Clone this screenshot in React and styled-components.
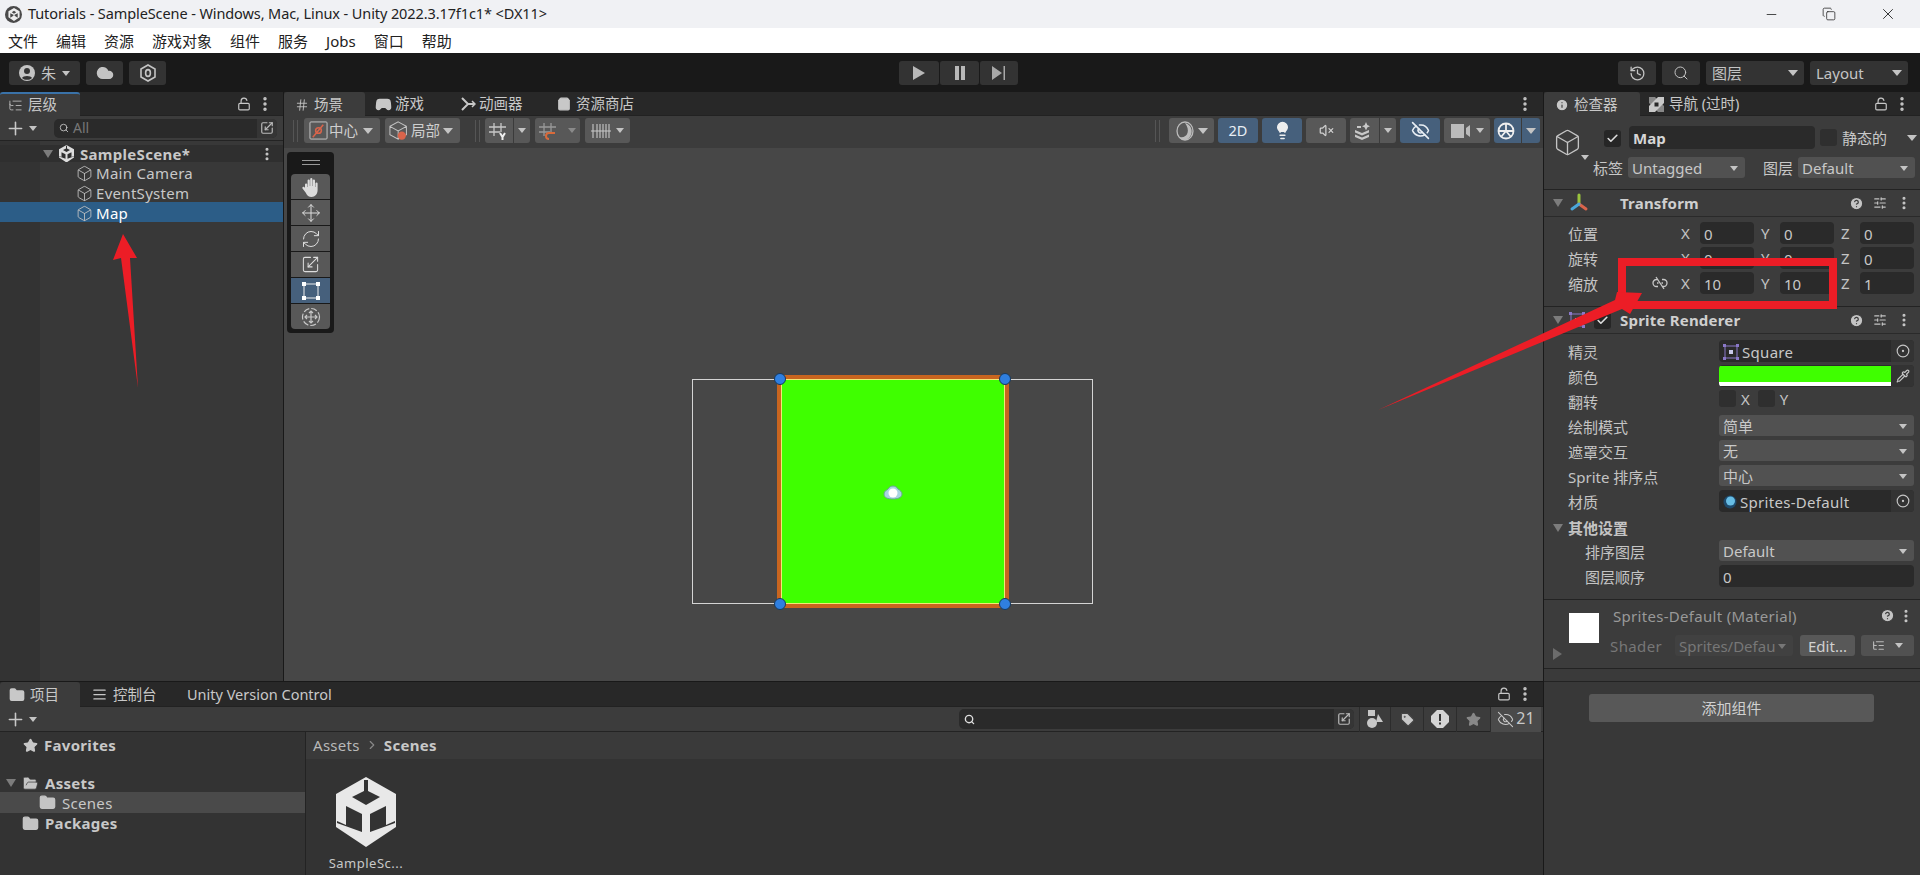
import React from 'react';
import styled, { createGlobalStyle } from 'styled-components';
import {
  Move, RefreshCw, Scaling, History, Search, LockOpen, EllipsisVertical, Plus,
  EyeOff, SlidersHorizontal, Star, Tag, Lightbulb, Gamepad2, Hash, ShoppingBag, Info,
  Box, Cloud, CircleHelp, ListTree, X, Minus, Copy, Check, Pipette, CircleDot, VolumeX, Folder, FolderOpen, ChevronRight, AlignJustify, Search as Lens
} from 'lucide-react';

const Global = createGlobalStyle`
  html, body { margin: 0; padding: 0; height: 100%; background: #191919; overflow: hidden; }
  * { box-sizing: border-box; }
  #root { height: 100%; }
`;

const FONT = `"Noto Sans", "Noto Sans CJK SC", sans-serif`;

const Page = styled.div`
  position: relative; width: 1920px; height: 875px; display: flex; flex-direction: column;
  font: 15px/1.2 ${FONT}; color: #c8c8c8; overflow: hidden; background: #191919;
`;
const TitleBar = styled.div`
  height: 28px; flex: none; background: #f0f1f4; color: #222; display: flex; align-items: center; padding: 0 0 0 5px;
`;
const TitleIcon = styled.div`
  width: 17px; height: 17px; border-radius: 50%; background: #4a4a4a; display: flex; align-items: center; justify-content: center; margin-right: 6px;
`;
const TitleText = styled.div`
  font-size: 14.5px; letter-spacing: -0.1px; white-space: nowrap;
`;
const WinControls = styled.div`
  margin-left: auto; display: flex; align-items: center; gap: 43px; padding-right: 23px; color: #222;
`;
const MenuBar = styled.div`
  height: 25px; flex: none; background: #fff; color: #222; display: flex; align-items: center; gap: 18px; padding: 0 0 0 8px;
`;
const MainBar = styled.div`
  height: 39px; flex: none; background: #191919; display: grid; grid-template-columns: 1fr auto 1fr; align-items: start; padding: 8px 12px 0 9px;
`;
const BarGroup = styled.div`
  display: flex; gap: ${p => p.$gap ?? 6}px; justify-content: ${p => p.$end ? 'flex-end' : 'flex-start'};
`;
const BarBtn = styled.div`
  height: 24px; width: ${p => p.$w}px; background: #333; border-radius: 3px; display: flex; align-items: center;
  justify-content: ${p => p.$spread ? 'space-between' : 'center'}; color: #c4c4c4; gap: 6px; padding: ${p => p.$spread ? '0 6px' : '0'};
  border-left: ${p => p.$split ? '1px solid #191919' : 'none'};
`;
const Caret = styled.span`
  display: inline-block; width: 0; height: 0; flex: none; margin-left: ${p => p.$ml || 0}px;
  border-left: ${p => p.$s || 5}px solid transparent; border-right: ${p => p.$s || 5}px solid transparent;
  border-top: ${p => (p.$s || 5) + 1}px solid ${p => p.$c || '#c4c4c4'};
`;
const Workspace = styled.div`
  flex: 1; min-height: 0; display: flex; gap: 1px; background: #191919;
`;
const LeftColumn = styled.div`
  width: 1543px; flex: none; display: flex; flex-direction: column; gap: 1px;
`;
const TopRow = styled.div`
  height: 589px; flex: none; display: flex; gap: 1px;
`;
const Panel = styled.div`
  display: flex; flex-direction: column; background: #383838; width: ${p => p.$w ? p.$w + 'px' : 'auto'}; flex: ${p => p.$w ? 'none' : '1'}; min-width: 0;
`;
const TabBar = styled.div`
  height: ${p => p.$h || 24}px; flex: none; background: #282828; display: flex; align-items: stretch; border-bottom: 1px solid #222;
`;
const Tab = styled.div`
  width: ${p => p.$w}px; flex: none; display: flex; align-items: center; gap: ${p => p.$gap ?? 5}px; padding: ${p => p.$pt ?? 1}px 0 0 ${p => p.$pl ?? 8}px;
  background: ${p => p.$active ? '#3c3c3c' : 'transparent'}; color: #c8c8c8; white-space: nowrap; margin-bottom: ${p => p.$active ? '-1px' : 0};
  border-top: ${p => p.$focus ? '2px solid #3a72a8' : '0'}; border-radius: 3px 3px 0 0; font-size: 14.5px;
`;
const TabTools = styled.div`
  margin-left: auto; display: flex; align-items: center; gap: 5px; padding-right: 9px; color: #c8c8c8;
`;
const SmallBar = styled.div`
  height: 25px; flex: none; display: flex; align-items: center; background: #3c3c3c; border-bottom: 1px solid #232323; padding: 0 1px 0 5px; color: #c8c8c8;
`;
const SearchBox = styled.div`
  height: ${p => p.$h || 19}px; background: #2a2a2a; border-radius: 5px; display: flex; align-items: center; color: #777;
  padding-left: 5px; font-size: 14px; width: ${p => p.$w}px; margin: 0 ${p => p.$mr || 0}px 0 ${p => p.$ml || 0}px; flex: none; gap: 4px; overflow: hidden;
`;
const SearchEnd = styled.div`
  margin-left: auto; height: 100%; width: 20px; background: #353535; display: flex; align-items: center; justify-content: center; color: #bbb;
`;
const TreeArea = styled.div`
  flex: 1; padding-top: 4px; background: linear-gradient(90deg, #333 0 40px, #383838 40px);
`;
const TreeRow = styled.div`
  height: ${p => p.$h || 20}px; display: flex; align-items: center; gap: ${p => p.$gap ?? 3}px; padding: ${p => p.$pt ?? 2}px 8px 0 ${p => p.$pl}px;
  background: ${p => p.$sel ? '#2c5d87' : p.$root ? '#2f2f2f' : 'transparent'};
  color: ${p => p.$sel ? '#fff' : '#c8c8c8'}; font-weight: ${p => p.$root ? 700 : 400}; letter-spacing: .3px;
`;
const EndDots = styled.span`
  margin-left: auto; display: flex; align-items: center;
`;
const SceneBar = styled.div`
  height: 32px; flex: none; display: flex; align-items: center; background: #3c3c3c; padding: 0 3px 3px 9px;
`;
const Grip = styled.div`
  width: 5px; height: 22px; flex: none; margin-left: ${p => p.$ml || 0}px; border-left: 1px solid #555; border-right: 1px solid #555;
`;
const Btn = styled.div`
  height: 25px; width: ${p => p.$w}px; flex: none; background: ${p => p.$on ? '#46607c' : '#585858'}; border-radius: 3px;
  display: flex; align-items: center; justify-content: ${p => p.$pad !== undefined ? 'flex-start' : 'center'}; padding-left: ${p => p.$pad || 0}px;
  gap: ${p => p.$gap ?? 3}px; color: ${p => p.$on ? '#e8eef4' : '#cfcfcf'}; margin-left: ${p => p.$ml ?? 4}px;
  overflow: hidden; font-size: 14.5px;
`;
const BtnPart = styled.div`
  height: 100%; flex: ${p => p.$w ? 'none' : 1}; width: ${p => p.$w ? p.$w + 'px' : 'auto'}; display: flex; align-items: center; justify-content: center;
  border-left: ${p => p.$line ? '1px solid #3b3b3b' : 'none'};
`;
const RightTools = styled.div`
  margin-left: auto; display: flex; align-items: center;
`;
const SceneView = styled.div`
  position: relative; flex: 1; background: #474747;
`;
const ToolDock = styled.div`
  position: absolute; left: 3px; top: 4px; width: 47px; height: 181px; background: #191919; border-radius: 4px;
  display: flex; flex-direction: column; align-items: center; padding: 8px 4px 0; 
`;
const DockGrip = styled.div`
  width: 18px; height: 5px; border-top: 1px solid #999; border-bottom: 1px solid #999; margin-bottom: 9px; flex: none;
`;
const DockBtn = styled.div`
  width: 39px; height: 25px; flex: none; margin-bottom: 1px; background: ${p => p.$on ? '#46607c' : '#585858'}; display: flex; align-items: center; justify-content: center; color: #ddd;
  border-radius: ${p => p.$r || '0'};
`;
const BoundsRect = styled.div`
  position: absolute; left: 408px; top: 231px; width: 401px; height: 225px; border: 1.5px solid #d4d4d4;
`;
const SpriteFrame = styled.div`
  position: absolute; left: 493px; top: 227px; width: 232px; height: 233px; border: 4px solid #c9651f; 
`;
const SpriteFill = styled.div`
  width: 100%; height: 100%; background: #3fff00; border: 1px solid #f2e976;
`;
const Handle = styled.div`
  position: absolute; left: ${p => p.$x - 6}px; top: ${p => p.$y - 6}px; width: 12px; height: 12px; border-radius: 50%;
  background: #2f7fe0; border: 1px solid #16395f;
`;
const Pivot = styled.svg`
  position: absolute; left: 599px; top: 336px;
`;
const Bottom = styled.div`
  flex: 1; min-height: 0; display: flex; flex-direction: column; background: #333;
`;
const FilterBtn = styled.div`
  width: ${p => p.$w}px; height: 25px; flex: none; display: flex; align-items: center; justify-content: center; gap: 2px; color: ${p => p.$dim ? '#888' : '#c8c8c8'};
  background: ${p => p.$on ? '#4a4a4a' : 'transparent'}; border-left: 1px solid #2c2c2c; font-size: 16px;
`;
const ProjectBody = styled.div`
  flex: 1; min-height: 0; display: flex;
`;
const FolderPane = styled.div`
  width: 306px; flex: none; background: #333; border-right: 1px solid #232323; padding-top: 3px;
`;
const FolderRow = styled.div`
  height: ${p => p.$h || 20}px; margin-bottom: ${p => p.$mb || 0}px; display: flex; align-items: center; gap: ${p => p.$gap ?? 6}px; padding-left: ${p => p.$pl}px;
  background: ${p => p.$sel ? '#4a4a4a' : 'transparent'}; font-weight: ${p => p.$bold ? 700 : 400}; color: #c8c8c8; letter-spacing: .3px;
`;
const AssetPane = styled.div`
  flex: 1; display: flex; flex-direction: column; min-width: 0;
`;
const Crumbs = styled.div`
  height: 27px; flex: none; background: #3a3a3a; display: flex; align-items: center; gap: 5px; padding: 0 0 2px 7px; color: #b8b8b8; letter-spacing: .3px;
`;
const CrumbNow = styled.span`
  font-weight: 700; color: #c8c8c8;
`;
const AssetTile = styled.div`
  width: 90px; margin: 18px 0 0 15px; display: flex; flex-direction: column; align-items: center; gap: 9px; font-size: 13px; letter-spacing: .5px; color: #c8c8c8;
`;
const InspectorTop = styled.div`
  height: 74px; flex: none; background: #3c3c3c; border-bottom: 1px solid #232323; display: grid;
  grid-template-columns: 40px 36px 1fr; grid-template-rows: 41px 21px; padding: 0 6px 0 9px; white-space: nowrap;
`;
const CubeCell = styled.div`
  grid-row: 1 / span 2; padding-top: 12px; display: flex; flex-direction: column; color: #c4c4c4;
`;
const CubeCaret = styled(Caret)`
  align-self: flex-end; margin: -2px 4px 0 0;
`;
const CheckCell = styled.div`
  display: flex; align-items: center; padding-top: 3px; justify-content: flex-end; padding-right: 8px;
`;
const Checkbox = styled.span`
  width: ${p => p.$s || 17}px; height: ${p => p.$s || 17}px; flex: none; background: ${p => p.$light ? '#2f2f2f' : '#262626'}; border-radius: 3px; display: inline-flex;
  align-items: center; justify-content: center; color: #ddd; margin-left: ${p => p.$ml || 0}px;
`;
const NameRow = styled.div`
  display: flex; align-items: center; gap: 5px; padding-top: 2px;
`;
const NameField = styled.div`
  width: 186px; height: 23px; flex: none; background: #2a2a2a; border-radius: 4px; display: flex; align-items: center; padding-left: 4px; font-weight: 700; color: #d6d6d6;
`;
const TagRow = styled.div`
  grid-column: 2 / span 2; display: flex; align-items: center; gap: 5px;
`;
const TagLabel = styled.span`
  flex: none; width: 30px; margin-left: ${p => p.$ml || 0}px; padding-top: 1px;
`;
const DropDown = styled.div`
  width: ${p => p.$w ? p.$w + 'px' : 'auto'}; flex: ${p => p.$w ? 'none' : 1}; height: ${p => p.$h || 21}px; background: ${p => p.$dim ? '#414141' : '#515151'}; border-radius: 3px;
  display: flex; align-items: center; justify-content: space-between; padding: 1px 7px 0 4px; color: ${p => p.$dim ? '#777' : '#c8c8c8'}; overflow: hidden; white-space: nowrap;
  margin-left: ${p => p.$ml || 0}px;
`;
const SectionHead = styled.div`
  height: ${p => p.$h || 27}px; flex: none; background: #3c3c3c; border-bottom: 1px solid #2a2a2a; display: flex; align-items: center; padding: 0 8px 0 9px; gap: 6px;
`;
const HeadTitle = styled.div`
  font-weight: 700; position: absolute; left: 51px; top: 4px; letter-spacing: .2px; color: #cfcfcf; white-space: nowrap;
`;
const HeadSlot = styled.div`
  position: relative; flex: 1; display: flex; align-items: center; height: 100%; gap: 8px;
`;
const HeadTools = styled.div`
  margin-left: auto; display: flex; align-items: center; gap: 9px; color: #c4c4c4;
`;
const TriDown = styled.span`
  width: 0; height: 0; flex: none; border-left: 5px solid transparent; border-right: 5px solid transparent; border-top: 8px solid #7c7c7c;
`;
const TriRight = styled.span`
  width: 0; height: 0; flex: none; border-top: 6px solid transparent; border-bottom: 6px solid transparent; border-left: 9px solid #6c6c6c;
  align-self: flex-end; margin: 0 0 8px 0;
`;
const SectionBody = styled.div`
  background: #3c3c3c; padding: ${p => p.$pt}px 6px ${p => p.$pb}px 24px; border-bottom: 1px solid #232323; flex: none;
`;
const PropRow = styled.div`
  height: 25px; display: flex; align-items: flex-start; gap: 0; margin-left: ${p => p.$ml || 0}px;
`;
const GroupRow = styled(PropRow)`
  align-items: center; gap: 5px; height: 25px;
`;
const PropLabel = styled.div`
  width: ${p => p.$w || 127}px; flex: none; height: 22px; display: flex; align-items: center; font-weight: ${p => p.$bold ? 700 : 400}; white-space: nowrap; color: #c4c4c4; padding-top: 1px;
`;
const VecLink = styled.div`
  width: 53px; flex: none; height: 22px; display: flex; align-items: center; justify-content: flex-end; padding-right: 13px; color: #c4c4c4;
`;
const VecCell = styled.div`
  width: 73px; flex: none; display: flex; align-items: center; margin-right: 7px; &:last-child { margin-right: 0; }
`;
const Axis = styled.span`
  width: 19px; flex: none; letter-spacing: 0; color: #c4c4c4;
`;
const Field = styled.div`
  width: ${p => p.$w ? p.$w + 'px' : 'auto'}; flex: ${p => p.$w ? 'none' : 1}; height: 22px; background: #2a2a2a; border-radius: 4px; display: flex; align-items: center; padding: 2px 0 0 4px; color: #c8c8c8;
`;
const ObjField = styled(Field)`
  padding: 0; overflow: hidden; gap: 2px;
`;
const ObjName = styled.div`
  flex: 1; display: flex; align-items: center; gap: 3px; padding: 1px 0 0 4px; letter-spacing: .3px;
`;
const ObjEnd = styled.div`
  width: 23px; height: 100%; background: #333; display: flex; align-items: center; justify-content: center; color: #c4c4c4;
`;
const ColorField = styled(Field)`
  padding: 0; overflow: hidden;
`;
const ColorBar = styled.div`
  flex: 1; height: 20px; background: linear-gradient(#3fff00 0 16px, #fff 16px);
`;
const FlagText = styled.span`
  margin: 0 8px 0 5px; color: #c4c4c4;
`;
const MaterialBox = styled.div`
  height: 69px; flex: none; background: #3c3c3c; border-bottom: 1px solid #232323; display: flex; padding: 13px 6px 0 9px;
`;
const Swatch = styled.div`
  width: 30px; height: 30px; flex: none; background: #fff; margin: 0 11px 0 7px;
`;
const MatMain = styled.div`
  flex: 1; display: flex; flex-direction: column; min-width: 0;
`;
const MatTitle = styled.div`
  height: 23px; margin-top: -9px; display: flex; align-items: center; justify-content: space-between; color: #999; padding-left: 3px; letter-spacing: .3px;
`;
const MatDots = styled.div`
  display: flex; align-items: center; gap: 3px; color: #c4c4c4;
`;
const ShaderRow = styled.div`
  display: flex; align-items: center; margin-top: 8px; gap: 6px;
`;
const ShaderLabel = styled.div`
  width: 59px; flex: none; color: #777; letter-spacing: .4px;
`;
const EditBtn = styled.div`
  width: 55px; height: 21px; flex: none; background: #585858; border-radius: 3px; display: flex; align-items: center; justify-content: center; color: #d0d0d0; margin-left: 1px;
`;
const MenuBtn = styled(EditBtn)`
  margin-left: 0; width: 53px; background: #515151; gap: 10px; color: #bbb;
`;
const Gap = styled.div`
  height: 13px; flex: none; background: #3a3a3a; border-bottom: 1px solid #232323;
`;
const AddArea = styled.div`
  flex: 1; background: #383838; display: flex; justify-content: flex-start; padding: 12px 0 0 45px;
`;
const AddBtn = styled.div`
  width: 285px; height: 28px; background: #585858; border-radius: 3px; display: flex; align-items: center; justify-content: center; color: #d0d0d0;
`;
const Overlay = styled.svg`
  position: absolute; left: 0; top: 0; pointer-events: none;
`;

const Unity = ({ s = 60, c = '#e8e8e8' }) => (
  <svg width={s} height={s * 70 / 60} viewBox="0 0 60 70">
    <path fill={c} fillRule="evenodd" d="M30 0 60 17V50L30 70 0 50V17ZM28 3H32V14L44 20 30 28 16 20 28 14ZM10 29 26 37V55L1 46V44L10 48ZM50 29V48L59 44V46L34 55V37Z" />
  </svg>
);
const FolderIcon = ({ open }) => open ? <FolderOpen size={17} fill="#c4c4c4" color="#383838" strokeWidth={1} /> : <Folder size={17} fill="#c4c4c4" color="#c4c4c4" />;
const Dots = ({ size = 18, c }) => <EllipsisVertical size={size} strokeWidth={2.6} color={c || '#c8c8c8'} />;
const Cube = ({ size = 17 }) => <Box size={size} strokeWidth={1.2} color="#c4c4c4" />;

const TransformGizmoIcon = () => (
  <svg width="20" height="20" viewBox="0 0 20 20" strokeWidth="3" strokeLinecap="round">
    <path d="M10 2V10" stroke="#9ac43d" /><path d="M10 11 17 16" stroke="#d9644b" /><path d="M10 11 3 16" stroke="#4aa6d8" />
  </svg>
);
const HandTool = () => (
  <svg width="22" height="22" viewBox="0 0 22 22" fill="#dcdcdc">
    <path d="M5 8.500a1.100 1.100 0 0 1 2.200 0V11h.4V4.500a1.100 1.100 0 0 1 2.200 0V10h.4V3.200a1.100 1.100 0 0 1 2.200 0V10h.4V4.500a1.100 1.100 0 0 1 2.200 0V11h.4V7.500a1.100 1.100 0 0 1 2.200 0V14c0 4-2.500 7-6 7-3 0-4.500-1.500-6-4.500L2.500 12.500c-.7-1.300 1-2.300 2-1.200L5 12Z" />
  </svg>
);
const RectTool = () => (
  <svg width="20" height="20" viewBox="0 0 20 20">
    <rect x="3" y="3" width="14" height="14" fill="none" stroke="#eee" strokeWidth="1" />
    <g fill="#fff"><rect x="1" y="1" width="4" height="4" /><rect x="15" y="1" width="4" height="4" /><rect x="1" y="15" width="4" height="4" /><rect x="15" y="15" width="4" height="4" /></g>
  </svg>
);
const TransformTool = () => (
  <svg width="22" height="22" viewBox="0 0 22 22" fill="none" stroke="#c8c8c8" strokeWidth="1.200">
    <circle cx="11" cy="11" r="8.500" strokeDasharray="6 2" />
    <path d="M11 5V17M5 11H17M9 7l2-2 2 2M9 15l2 2 2-2M7 9l-2 2 2 2M15 9l2 2-2 2" />
  </svg>
);
const Play = () => <svg width="12" height="14" viewBox="0 0 12 14"><path d="M0 0 12 7 0 14Z" fill="#b8b8b8" /></svg>;
const Pause = () => <svg width="12" height="14" viewBox="0 0 12 14"><path d="M1 0H5V14H1ZM7 0H11V14H7Z" fill="#b8b8b8" /></svg>;
const Step = () => <svg width="14" height="14" viewBox="0 0 14 14"><path d="M0 0 10 7 0 14ZM11.500 0H13V14H11.500Z" fill="#a8a8a8" /></svg>;
const Hex = () => (
  <svg width="16" height="18" viewBox="0 0 16 18" fill="none" stroke="#c4c4c4" strokeWidth="1.600">
    <path d="M8 1 15 5V13L8 17 1 13V5Z" /><ellipse cx="8" cy="9" rx="2.400" ry="3.400" />
  </svg>
);
const User = () => (
  <svg width="16" height="16" viewBox="0 0 15 15"><circle cx="7.500" cy="7.500" r="7.500" fill="#c4c4c4" /><circle cx="7.500" cy="5.600" r="2.800" fill="#333" /><path d="M2.800 12.200C3.600 9.600 11.400 9.600 12.200 12.200 10 14.500 5 14.500 2.800 12.200Z" fill="#333" /></svg>
);
const Shade = () => (
  <svg width="18" height="20" viewBox="0 0 18 20"><ellipse cx="9" cy="10" rx="8" ry="9" fill="none" stroke="#bbb" strokeWidth="1.300" /><path d="M3 16C11 18 15 10 9 2 18 4 18 17 9 19 6 19 4 18 3 16Z" fill="#bbb" /></svg>
);
const SnapIcon = ({ c = '#c8c8c8', mag }) => (
  <svg width="20" height="20" viewBox="0 0 20 20" fill="none" stroke={c} strokeWidth="1.300">
    <path d="M6 2V15M13 2V11M1 6H18M1 11H12" />
    {mag ? <path d="M11 18a3 3 0 0 1 0-6h6" stroke="#d96a3a" strokeWidth="2" /> : <path d="M12 12l2.500 4 2.500-4M14.500 16v3" stroke="#eee" strokeWidth="2" />}
  </svg>
);
const Ruler = () => (
  <svg width="20" height="18" viewBox="0 0 20 18" stroke="#c8c8c8" strokeWidth="1.100"><path d="M2 2V16M6 2V16M9 2V16M12 2V16M15 2V16M18 2V16M0 9H20" /></svg>
);
const PivotIcon = () => (
  <svg width="19" height="19" viewBox="0 0 20 20" fill="none"><rect x="1" y="1" width="18" height="18" rx="1" stroke="#c8c8c8" /><circle cx="10" cy="10" r="3" stroke="#d9644b" strokeWidth="1.600" /><path d="M4 17 15 4" stroke="#d9644b" strokeWidth="1.600" /></svg>
);
const LocalIcon = () => (
  <svg width="22" height="22" viewBox="0 0 24 22" fill="none"><path d="M10 1 19 6V15L10 20 1 15V6ZM1 6l9 5 9-5M10 11v9" stroke="#c4c4c4" strokeWidth="1.100" /><circle cx="14" cy="16" r="4.500" fill="#d9644b" /></svg>
);
const AxisGizmo = () => (
  <svg width="20" height="20" viewBox="0 0 20 20" fill="none" stroke="#eee" strokeWidth="1.800"><circle cx="10" cy="10" r="7.500" /><path d="M2.500 10H17.500M10 2.500V10L5 16M10 10l5 6" /></svg>
);
const FxIcon = () => (
  <svg width="20" height="18" viewBox="0 0 20 18" fill="#c8c8c8"><path d="M13 0l1.300 3L17 4.300l-2.700 1.200L13 8.500l-1.300-3L9 4.300l2.700-1.300ZM2 8l7 3 7-3v2.500l-7 3-7-3ZM2 12.500l7 3 7-3V15l-7 3-7-3Z" /><rect x="4" y="4" width="4" height="2" /></svg>
);
const CamIcon = () => (
  <svg width="20" height="16" viewBox="0 0 20 16" fill="#bbb"><rect x="0" y="1" width="13" height="14" /><path d="M15 5 19 2V14L15 11Z" /></svg>
);
const ShapesIcon = () => (
  <svg width="16" height="20" viewBox="0 0 16 20" fill="#c8c8c8"><rect x="1" y="1" width="7" height="6" /><circle cx="5" cy="14" r="5" /><path d="M11 5 16 13H9Z" /></svg>
);
const Alert = () => (
  <svg width="18" height="18" viewBox="0 0 18 18"><path d="M6 0H12L18 6V12L12 18H6L0 12V6Z" fill="#d4d4d4" /><path d="M8 4H10V11H8ZM8 12.500H10V14.500H8Z" fill="#333" /></svg>
);
const SpriteIcon = () => (
  <svg width="16" height="16" viewBox="0 0 16 16" fill="none"><rect x="2" y="2" width="12" height="12" stroke="#8a78c8" /><rect x="6" y="6" width="4" height="4" fill="#c8c8e8" /><g fill="#8a78c8"><rect x="0" y="0" width="3" height="3" /><rect x="13" y="0" width="3" height="3" /><rect x="0" y="13" width="3" height="3" /><rect x="13" y="13" width="3" height="3" /></g></svg>
);
const Ball = () => (
  <svg width="14" height="14" viewBox="0 0 14 14"><circle cx="7" cy="7" r="6.500" fill="#1e4a6c" /><circle cx="7.500" cy="6" r="4.500" fill="#67bde4" /></svg>
);
const LogoMark = () => (
  <svg width="12" height="13" viewBox="0 0 60 70"><path fill="#eee" fillRule="evenodd" d="M30 0 60 17V50L30 70 0 50V17ZM30 15 18 23 30 31 42 23ZM10 28V52L27 42V36ZM50 28 33 36V42L50 52Z" /></svg>
);
const AnimIcon = () => (
  <svg width="15" height="14" viewBox="0 0 15 14" fill="none" stroke="#c8c8c8" strokeWidth="2"><path d="M1 1 7 7 1 13M7 7H13" /><path d="M11 4l3 3-3 3" strokeWidth="1.500" /></svg>
);
const NavIcon = () => (
  <svg width="15" height="15" viewBox="0 0 15 15"><path d="M0 0H6L15 9V15H9L0 6Z" fill="#888" /><path d="M15 0H9L0 9V15H6L15 6Z" fill="#c8c8c8" /><rect x="5.500" y="5.500" width="4" height="4" fill="#282828" /></svg>
);
const ChainOff = () => (
  <svg width="16" height="14" viewBox="0 0 16 14" fill="none" stroke="#c8c8c8" strokeWidth="1.300">
    <path d="M6 3.500H4.500a3.500 3.500 0 0 0 0 7H6M10 3.500h1.500a3.500 3.500 0 0 1 0 7H10M5 7h1.500M9.500 7H11M4 1l8 12" />
  </svg>
);

const cellVec = (x, y, z) => (
  <>
    <VecCell><Axis>X</Axis><Field $w={54}>{x}</Field></VecCell>
    <VecCell><Axis>Y</Axis><Field $w={54}>{y}</Field></VecCell>
    <VecCell><Axis>Z</Axis><Field $w={54}>{z}</Field></VecCell>
  </>
);

const DotsLock = () => (
  <TabTools><LockOpen size={14} /><Dots size={18} /></TabTools>
);
const HeaderTools = ({ sliders = true }) => (
  <HeadTools>
    <CircleHelp size={15} fill="#c4c4c4" color="#3c3c3c" />
    {sliders && <SlidersHorizontal size={14} />}
    <Dots size={16} />
  </HeadTools>
);

export default function App() {
  return (
    <Page>
      <Global />
      <TitleBar>
        <TitleIcon><LogoMark /></TitleIcon>
        <TitleText>Tutorials - SampleScene - Windows, Mac, Linux - Unity 2022.3.17f1c1* &lt;DX11&gt;</TitleText>
        <WinControls>
          <Minus size={15} strokeWidth={1.3} />
          <Copy size={14} strokeWidth={1.3} />
          <X size={18} strokeWidth={1.2} />
        </WinControls>
      </TitleBar>
      <MenuBar>
        {['文件', '编辑', '资源', '游戏对象', '组件', '服务', 'Jobs', '窗口', '帮助'].map(m => <span key={m}>{m}</span>)}
      </MenuBar>
      <MainBar>
        <BarGroup>
          <BarBtn $w={71}><User />朱<Caret $s={4} /></BarBtn>
          <BarBtn $w={37}><Cloud size={18} fill="#c4c4c4" color="#c4c4c4" /></BarBtn>
          <BarBtn $w={37}><Hex /></BarBtn>
        </BarGroup>
        <BarGroup $gap={0}>
          <BarBtn $w={40}><Play /></BarBtn>
          <BarBtn $w={40} $split><Pause /></BarBtn>
          <BarBtn $w={39} $split><Step /></BarBtn>
        </BarGroup>
        <BarGroup $end>
          <BarBtn $w={38}><History size={17} strokeWidth={1.8} /></BarBtn>
          <BarBtn $w={38}><Search size={16} strokeWidth={1.5} /></BarBtn>
          <BarBtn $w={98} $spread>图层<Caret /></BarBtn>
          <BarBtn $w={98} $spread>Layout<Caret /></BarBtn>
        </BarGroup>
      </MainBar>
      <Workspace>
        <LeftColumn>
          <TopRow>
            <Panel $w={283}>
              <TabBar>
                <Tab $w={80} $active $focus $pt={0}><ListTree size={15} strokeWidth={1.3} />层级</Tab>
                <DotsLock />
              </TabBar>
              <SmallBar>
                <Plus size={21} strokeWidth={1.8} /><Caret $s={4} $ml={3} />
                <SearchBox $w={223} $ml={17} $h={19}><Lens size={10} color="#ccc" />All<SearchEnd><Scaling size={14} /></SearchEnd></SearchBox>
              </SmallBar>
              <TreeArea>
                <TreeRow $root $pl={43} $h={17} $gap={6} $pt={0}><TriDown /><Unity s={15} c="#ddd" /><span>SampleScene*</span><EndDots><Dots size={16} /></EndDots></TreeRow>
                <TreeRow $pl={76}><Cube />Main Camera</TreeRow>
                <TreeRow $pl={76}><Cube />EventSystem</TreeRow>
                <TreeRow $pl={76} $sel><Cube />Map</TreeRow>
              </TreeArea>
            </Panel>
            <Panel>
              <TabBar>
                <Tab $w={81} $active $pl={11}><Hash size={14} strokeWidth={1.5} />场景</Tab>
                <Tab $w={85} $pl={10} $gap={3}><Gamepad2 size={17} fill="#c8c8c8" color="#c8c8c8" />游戏</Tab>
                <Tab $w={98} $pl={11} $gap={3}><AnimIcon />动画器</Tab>
                <Tab $w={110} $pl={9} $gap={5}><ShoppingBag size={14} fill="#c8c8c8" color="#c8c8c8" />资源商店</Tab>
                <TabTools><Dots size={18} /></TabTools>
              </TabBar>
              <SceneBar>
                <Grip />
                <Btn $w={76} $ml={6} $gap={1} $pad={5}><PivotIcon />中心<Caret $ml={4} /></Btn>
                <Btn $w={75} $ml={5} $gap={0} $pad={4}><LocalIcon />局部<Caret $ml={3} /></Btn>
                <Grip $ml={15} />
                <Btn $w={45} $ml={5}><BtnPart><SnapIcon /></BtnPart><BtnPart $w={17} $line><Caret $s={4} /></BtnPart></Btn>
                <Btn $w={45} $ml={5}><BtnPart><SnapIcon mag c="#999" /></BtnPart><BtnPart $w={17}><Caret $s={4} $c="#8a8a8a" /></BtnPart></Btn>
                <Btn $w={45} $ml={5} $gap={5}><Ruler /><Caret $s={4} /></Btn>
                <RightTools>
                  <Grip />
                  <Btn $w={45} $ml={9} $gap={4}><Shade /><Caret /></Btn>
                  <Btn $w={40} $on>2D</Btn>
                  <Btn $w={40} $on><Lightbulb size={19} fill="#eee" color="#eee" /></Btn>
                  <Btn $w={40}><VolumeX size={15} /></Btn>
                  <Btn $w={46}><BtnPart><FxIcon /></BtnPart><BtnPart $w={17} $line><Caret $s={4} /></BtnPart></Btn>
                  <Btn $w={40} $on><EyeOff size={19} /></Btn>
                  <Btn $w={46} $gap={5}><CamIcon /><Caret $s={4} /></Btn>
                  <Btn $w={46} $on><BtnPart><AxisGizmo /></BtnPart><BtnPart $w={19} $line><Caret /></BtnPart></Btn>
                </RightTools>
              </SceneBar>
              <SceneView>
                <ToolDock>
                  <DockGrip />
                  <DockBtn $r="4px 4px 0 0"><HandTool /></DockBtn>
                  <DockBtn><Move size={20} strokeWidth={1.2} /></DockBtn>
                  <DockBtn><RefreshCw size={20} strokeWidth={1.2} /></DockBtn>
                  <DockBtn><Scaling size={19} strokeWidth={1.3} /></DockBtn>
                  <DockBtn $on><RectTool /></DockBtn>
                  <DockBtn $r="0 0 4px 4px"><TransformTool /></DockBtn>
                </ToolDock>
                <BoundsRect />
                <SpriteFrame><SpriteFill /></SpriteFrame>
                <Handle $x={496} $y={231} /><Handle $x={721} $y={231} /><Handle $x={496} $y={456} /><Handle $x={721} $y={456} />
                <Pivot width="20" height="18" viewBox="0 0 20 18">
                  <path d="M1 10C1 7 4 6 5 5 7 1 13 1 15 5 17 6 19 8 19 10 19 14 14 15 10 15 5 15 1 14 1 10Z" fill="#a9d3e2" stroke="#6aa58f" />
                  <circle cx="10" cy="9" r="4.500" fill="#fff" />
                </Pivot>
              </SceneView>
            </Panel>
          </TopRow>
          <Bottom>
            <TabBar $h={25}>
              <Tab $w={80} $active $pl={9}><Folder size={16} fill="#c8c8c8" color="#c8c8c8" />项目</Tab>
              <Tab $w={107} $pl={12} $gap={6}><AlignJustify size={15} />控制台</Tab>
              <Tab $w={170} $pl={0}>Unity Version Control</Tab>
              <TabTools><LockOpen size={14} /><Dots size={18} /></TabTools>
            </TabBar>
            <SmallBar>
              <Plus size={21} strokeWidth={1.8} /><Caret $s={4} $ml={3} />
              <SearchBox $w={395} $ml={922} $mr={5} $h={20}><Lens size={11} color="#ddd" strokeWidth={3} /><SearchEnd><Scaling size={14} /></SearchEnd></SearchBox>
              <FilterBtn $w={31}><ShapesIcon /></FilterBtn>
              <FilterBtn $w={33}><Tag size={15} fill="#c8c8c8" color="#444" /></FilterBtn>
              <FilterBtn $w={33}><Alert /></FilterBtn>
              <FilterBtn $w={34} $dim><Star size={15} fill="#888" color="#888" /></FilterBtn>
              <FilterBtn $w={51} $on><EyeOff size={17} strokeWidth={1.5} />21</FilterBtn>
            </SmallBar>
            <ProjectBody>
              <FolderPane>
                <FolderRow $pl={23} $h={20} $mb={19} $bold><Star size={15} fill="#c8c8c8" color="#c8c8c8" />Favorites</FolderRow>
                <FolderRow $pl={6} $h={18} $bold><TriDown /><FolderIcon open />Assets</FolderRow>
                <FolderRow $pl={39} $h={21} $sel><FolderIcon />Scenes</FolderRow>
                <FolderRow $pl={22} $bold><FolderIcon />Packages</FolderRow>
              </FolderPane>
              <AssetPane>
                <Crumbs>Assets<ChevronRight size={14} color="#888" /><CrumbNow>Scenes</CrumbNow></Crumbs>
                <AssetTile><Unity s={60} />SampleSc...</AssetTile>
              </AssetPane>
            </ProjectBody>
          </Bottom>
        </LeftColumn>
        <Panel>
          <TabBar>
            <Tab $w={96} $active $pl={11}><Info size={14} fill="#c8c8c8" color="#3c3c3c" />检查器</Tab>
            <Tab $w={160} $pl={9}><NavIcon />导航 (过时)</Tab>
            <DotsLock />
          </TabBar>
          <InspectorTop>
            <CubeCell><Box size={29} strokeWidth={1.1} /><CubeCaret $s={4} /></CubeCell>
            <CheckCell><Checkbox><Check size={13} strokeWidth={3} /></Checkbox></CheckCell>
            <NameRow>
              <NameField>Map</NameField>
              <Checkbox $light />静态的<Caret $s={5} $ml={15} />
            </NameRow>
            <TagRow>
              <TagLabel>标签</TagLabel>
              <DropDown $w={117}>Untagged<Caret $s={4} /></DropDown>
              <TagLabel $ml={13}>图层</TagLabel>
              <DropDown $w={117}>Default<Caret $s={4} /></DropDown>
            </TagRow>
          </InspectorTop>
          <SectionHead>
            <TriDown />
            <HeadSlot>
              <TransformGizmoIcon />
              <HeadTitle>Transform</HeadTitle>
              <HeaderTools />
            </HeadSlot>
          </SectionHead>
          <SectionBody $pt={5} $pb={9}>
            <PropRow><PropLabel $w={60}>位置</PropLabel><VecLink />{cellVec(0, 0, 0)}</PropRow>
            <PropRow><PropLabel $w={60}>旋转</PropLabel><VecLink />{cellVec(0, 0, 0)}</PropRow>
            <PropRow><PropLabel $w={60}>缩放</PropLabel><VecLink><ChainOff /></VecLink>{cellVec(10, 10, 1)}</PropRow>
          </SectionBody>
          <SectionHead>
            <TriDown />
            <HeadSlot>
              <SpriteIcon />
              <Checkbox $ml={1}><Check size={13} strokeWidth={3} /></Checkbox>
              <HeadTitle>Sprite Renderer</HeadTitle>
              <HeaderTools />
            </HeadSlot>
          </SectionHead>
          <SectionBody $pt={6} $pb={9}>
            <PropRow><PropLabel $w={151}>精灵</PropLabel><ObjField><ObjName><SpriteIcon />Square</ObjName><ObjEnd><CircleDot size={14} /></ObjEnd></ObjField></PropRow>
            <PropRow><PropLabel $w={151}>颜色</PropLabel><ColorField><ColorBar /><ObjEnd><Pipette size={14} /></ObjEnd></ColorField></PropRow>
            <PropRow><PropLabel $w={151}>翻转</PropLabel><Checkbox $light />
              <FlagText>X</FlagText><Checkbox $light /><FlagText>Y</FlagText></PropRow>
            <PropRow><PropLabel $w={151}>绘制模式</PropLabel><DropDown>简单<Caret $s={4} /></DropDown></PropRow>
            <PropRow><PropLabel $w={151}>遮罩交互</PropLabel><DropDown>无<Caret $s={4} /></DropDown></PropRow>
            <PropRow><PropLabel $w={151}>Sprite 排序点</PropLabel><DropDown>中心<Caret $s={4} /></DropDown></PropRow>
            <PropRow><PropLabel $w={151}>材质</PropLabel><ObjField><ObjName><Ball />Sprites-Default</ObjName><ObjEnd><CircleDot size={14} /></ObjEnd></ObjField></PropRow>
            <GroupRow $ml={-15}><TriDown /><PropLabel $bold $w={150}>其他设置</PropLabel></GroupRow>
            <PropRow $ml={17}><PropLabel $w={134}>排序图层</PropLabel><DropDown>Default<Caret $s={4} /></DropDown></PropRow>
            <PropRow $ml={17}><PropLabel $w={134}>图层顺序</PropLabel><Field>0</Field></PropRow>
          </SectionBody>
          <MaterialBox>
            <TriRight />
            <Swatch />
            <MatMain>
              <MatTitle>Sprites-Default (Material)<MatDots><CircleHelp size={15} fill="#c4c4c4" color="#3c3c3c" /><Dots size={16} /></MatDots></MatTitle>
              <ShaderRow>
                <ShaderLabel>Shader</ShaderLabel>
                <DropDown $w={118} $dim>Sprites/Defau<Caret $s={4} $c="#777" /></DropDown>
                <EditBtn>Edit...</EditBtn>
                <MenuBtn><ListTree size={13} /><Caret $s={4} /></MenuBtn>
              </ShaderRow>
            </MatMain>
          </MaterialBox>
          <Gap />
          <AddArea><AddBtn>添加组件</AddBtn></AddArea>
        </Panel>
      </Workspace>
      <Overlay width="1920" height="875" viewBox="0 0 1920 875">
        <path fill="none" stroke="#ec1d26" strokeWidth="8" d="M1622 262H1833V305H1622Z" />
        <polygon fill="#ec1d26" points="1378,410 1615,300 1617,292 1642,293 1630,314 1622,309" />
        <polygon fill="#ec1d26" points="138,388 121,258 113,260 123,234 137,258 130,258" />
      </Overlay>
    </Page>
  );
}
